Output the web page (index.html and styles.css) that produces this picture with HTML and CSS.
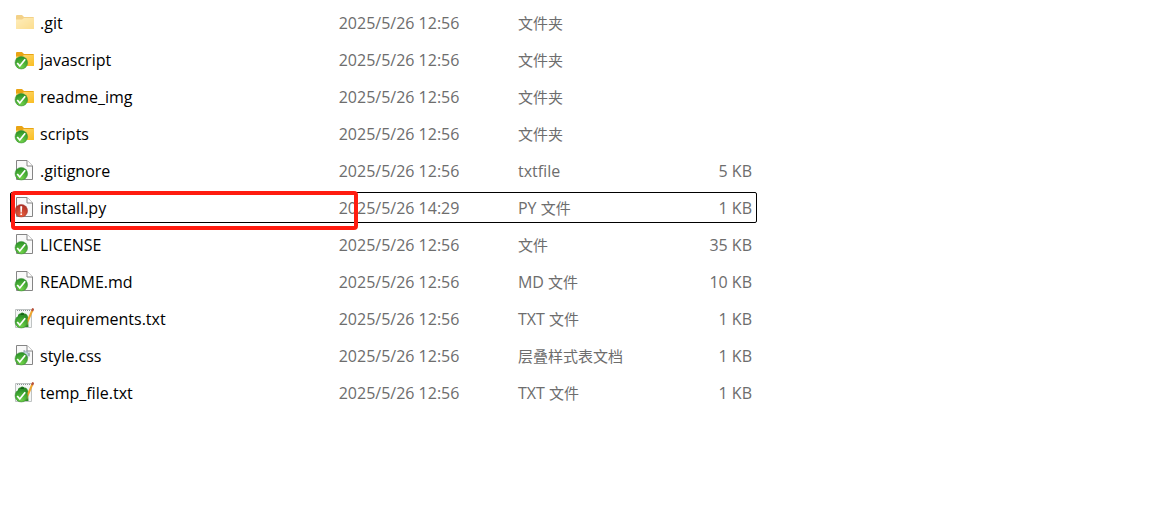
FILE: index.html
```
<!DOCTYPE html>
<html lang="zh-CN">
<head>
    <meta charset="UTF-8">
    <meta name="viewport" content="width=device-width, initial-scale=1.0">
    <title>文件列表</title>
    <link rel="stylesheet" href="styles.css">
</head>
<body>
    <!-- shared icon shapes -->
    <svg class="icon-defs" width="0" height="0" aria-hidden="true">
        <defs>
            <linearGradient id="folderFill" x1="0" y1="0" x2="1" y2="1">
                <stop offset="0" stop-color="#ffdc78"/>
                <stop offset="1" stop-color="#f9bd22"/>
            </linearGradient>
            <radialGradient id="greenFill" cx="0.5" cy="0.85" r="0.8">
                <stop offset="0" stop-color="#6fd048"/>
                <stop offset="1" stop-color="#2c9428"/>
            </radialGradient>
            <radialGradient id="redFill" cx="0.5" cy="0.85" r="0.8">
                <stop offset="0" stop-color="#e8603f"/>
                <stop offset="1" stop-color="#ae3026"/>
            </radialGradient>
            <symbol id="folder" viewBox="0 0 20 21">
                <path d="M2 4Q2 3 3 3H8L10 5H19Q20 5 20 6V9H2Z" fill="#e9a414"/>
                <path d="M2 7.5H8L10 6H20V16.5Q20 17 19.5 17H2.5Q2 17 2 16.5Z" fill="url(#folderFill)"/>
            </symbol>
            <symbol id="page" viewBox="0 0 20 21">
                <path d="M2.5 0.5H13L18.5 6V19.5H2.5Z" fill="#f9f9f9" stroke="#858585"/>
                <path d="M13 0.5V6H18.5" fill="#fff" stroke="#858585"/>
            </symbol>
            <symbol id="gear" viewBox="0 0 20 21">
                <circle cx="11.5" cy="9.5" r="3.5" fill="#dce8f0" stroke="#a5b0ba" stroke-width="2" stroke-dasharray="1.8 1"/>
                <circle cx="11.5" cy="9.5" r="2.7" fill="#c9dcea" stroke="#9aa9b5" stroke-width="0.7"/>
            </symbol>
            <symbol id="notepad" viewBox="0 0 20 21">
                <path d="M1.5 1.5H17.5V19.5H1.5Z" fill="#f4f6f6" stroke="#bfc3c3"/>
                <path d="M3 2.5H16" stroke="#8f9696" stroke-dasharray="1 1"/>
                <path d="M4 9Q3.5 5.5 6.5 5.5Q8 3.5 10 5.5Q14 5.5 14 10L14.5 19H4Z" fill="#2b8d26"/>
                <path d="M6.5 6.5L10 6" stroke="#155f18" stroke-width="1.5"/>
                <path d="M18.5 2L12 17" stroke="#efa62e" stroke-width="2"/>
                <path d="M19.2 0.5L18.1 3" stroke="#b9523c" stroke-width="2.2"/>
                <path d="M12.3 16L11.5 18.5" stroke="#55411d" stroke-width="1"/>
            </symbol>
            <symbol id="ok" viewBox="0 0 20 21">
                <circle cx="7.3" cy="13.7" r="6.3" fill="url(#greenFill)" stroke="#3a8a36" stroke-width="0.5"/>
                <path d="M3.2 14L5.8 17L11.2 10.3" fill="none" stroke="#fff" stroke-width="1.7"/>
            </symbol>
            <symbol id="alert" viewBox="0 0 20 21">
                <circle cx="7.3" cy="13.7" r="6.3" fill="url(#redFill)" stroke="#a3362d" stroke-width="0.5"/>
                <path d="M6.2 9.5Q7.2 8.5 8.2 9.5L7.8 15.5H6.6Z" fill="#fff"/>
                <circle cx="7.2" cy="17.2" r="0.9" fill="#fff"/>
            </symbol>
        </defs>
    </svg>

    <table class="file-list">
        <colgroup>
            <col class="col-name">
            <col class="col-date">
            <col class="col-type">
            <col class="col-size">
        </colgroup>
        <tbody>
            <tr>
                <td class="name"><div class="entry"><svg class="icon faded"><use href="#folder"/></svg><span>.git</span></div></td>
                <td>2025/5/26 12:56</td>
                <td><span class="zh">文件夹</span></td>
                <td class="size"></td>
            </tr>
            <tr>
                <td class="name"><div class="entry"><svg class="icon"><use href="#folder"/><use href="#ok"/></svg><span>javascript</span></div></td>
                <td>2025/5/26 12:56</td>
                <td><span class="zh">文件夹</span></td>
                <td class="size"></td>
            </tr>
            <tr>
                <td class="name"><div class="entry"><svg class="icon"><use href="#folder"/><use href="#ok"/></svg><span>readme_img</span></div></td>
                <td>2025/5/26 12:56</td>
                <td><span class="zh">文件夹</span></td>
                <td class="size"></td>
            </tr>
            <tr>
                <td class="name"><div class="entry"><svg class="icon"><use href="#folder"/><use href="#ok"/></svg><span>scripts</span></div></td>
                <td>2025/5/26 12:56</td>
                <td><span class="zh">文件夹</span></td>
                <td class="size"></td>
            </tr>
            <tr>
                <td class="name"><div class="entry"><svg class="icon"><use href="#page"/><use href="#ok"/></svg><span>.gitignore</span></div></td>
                <td>2025/5/26 12:56</td>
                <td>txtfile</td>
                <td class="size">5 KB</td>
            </tr>
            <tr class="focused">
                <td class="name"><div class="entry"><svg class="icon"><use href="#page"/><use href="#alert"/></svg><span>install.py</span></div><div class="marker"></div></td>
                <td>2025/5/26 14:29</td>
                <td>PY <span class="zh">文件</span></td>
                <td class="size">1 KB</td>
            </tr>
            <tr>
                <td class="name"><div class="entry"><svg class="icon"><use href="#page"/><use href="#ok"/></svg><span>LICENSE</span></div></td>
                <td>2025/5/26 12:56</td>
                <td><span class="zh">文件</span></td>
                <td class="size">35 KB</td>
            </tr>
            <tr>
                <td class="name"><div class="entry"><svg class="icon"><use href="#page"/><use href="#ok"/></svg><span>README.md</span></div></td>
                <td>2025/5/26 12:56</td>
                <td>MD <span class="zh">文件</span></td>
                <td class="size">10 KB</td>
            </tr>
            <tr>
                <td class="name"><div class="entry"><svg class="icon"><use href="#notepad"/><use href="#ok"/></svg><span>requirements.txt</span></div></td>
                <td>2025/5/26 12:56</td>
                <td>TXT <span class="zh">文件</span></td>
                <td class="size">1 KB</td>
            </tr>
            <tr>
                <td class="name"><div class="entry"><svg class="icon"><use href="#page"/><use href="#gear"/><use href="#ok"/></svg><span>style.css</span></div></td>
                <td>2025/5/26 12:56</td>
                <td><span class="zh">层叠样式表文档</span></td>
                <td class="size">1 KB</td>
            </tr>
            <tr>
                <td class="name"><div class="entry"><svg class="icon"><use href="#notepad"/><use href="#ok"/></svg><span>temp_file.txt</span></div></td>
                <td>2025/5/26 12:56</td>
                <td>TXT <span class="zh">文件</span></td>
                <td class="size">1 KB</td>
            </tr>
        </tbody>
    </table>
</body>
</html>
```
FILE: styles.css
```
body {
    font-family: "Open Sans", "Noto Sans CJK SC", sans-serif;
    font-size: 16px;
    line-height: 20px;
    background-color: #fff;
    margin: 0;
    padding: 1px 10px;
    color: #6d6d6d;
}
.icon-defs {
    position: absolute;
}
.file-list {
    width: 100%;
    max-width: 747px;
    table-layout: fixed;
    border-collapse: separate;
    border-spacing: 0 6px;
}
.col-name {
    width: 44%;
}
.col-date {
    width: 24%;
}
.col-type {
    width: 20%;
}
.col-size {
    width: 12%;
}
td {
    height: 31px;
    padding: 0;
    box-sizing: border-box;
    white-space: nowrap;
}
.name {
    position: relative;
    padding-left: 4px;
    color: #000;
}
.entry {
    display: flex;
    align-items: center;
    gap: 6px;
}
.icon {
    width: 20px;
    height: 21px;
    flex: none;
}
.faded {
    opacity: 0.5;
}
.zh {
    font-family: "Noto Sans CJK SC", sans-serif;
    font-size: 15px;
}
.size {
    text-align: right;
    padding-right: 5px;
}
.focused {
    outline: 1px solid #000;
    outline-offset: -1px;
    border-radius: 2px;
}
/* red frame around the highlighted file */
.marker {
    position: absolute;
    top: -1px;
    left: 1px;
    width: 347px;
    height: 39px;
    box-sizing: border-box;
    border: 4px solid #ff1c10;
    border-radius: 4px;
}
```
